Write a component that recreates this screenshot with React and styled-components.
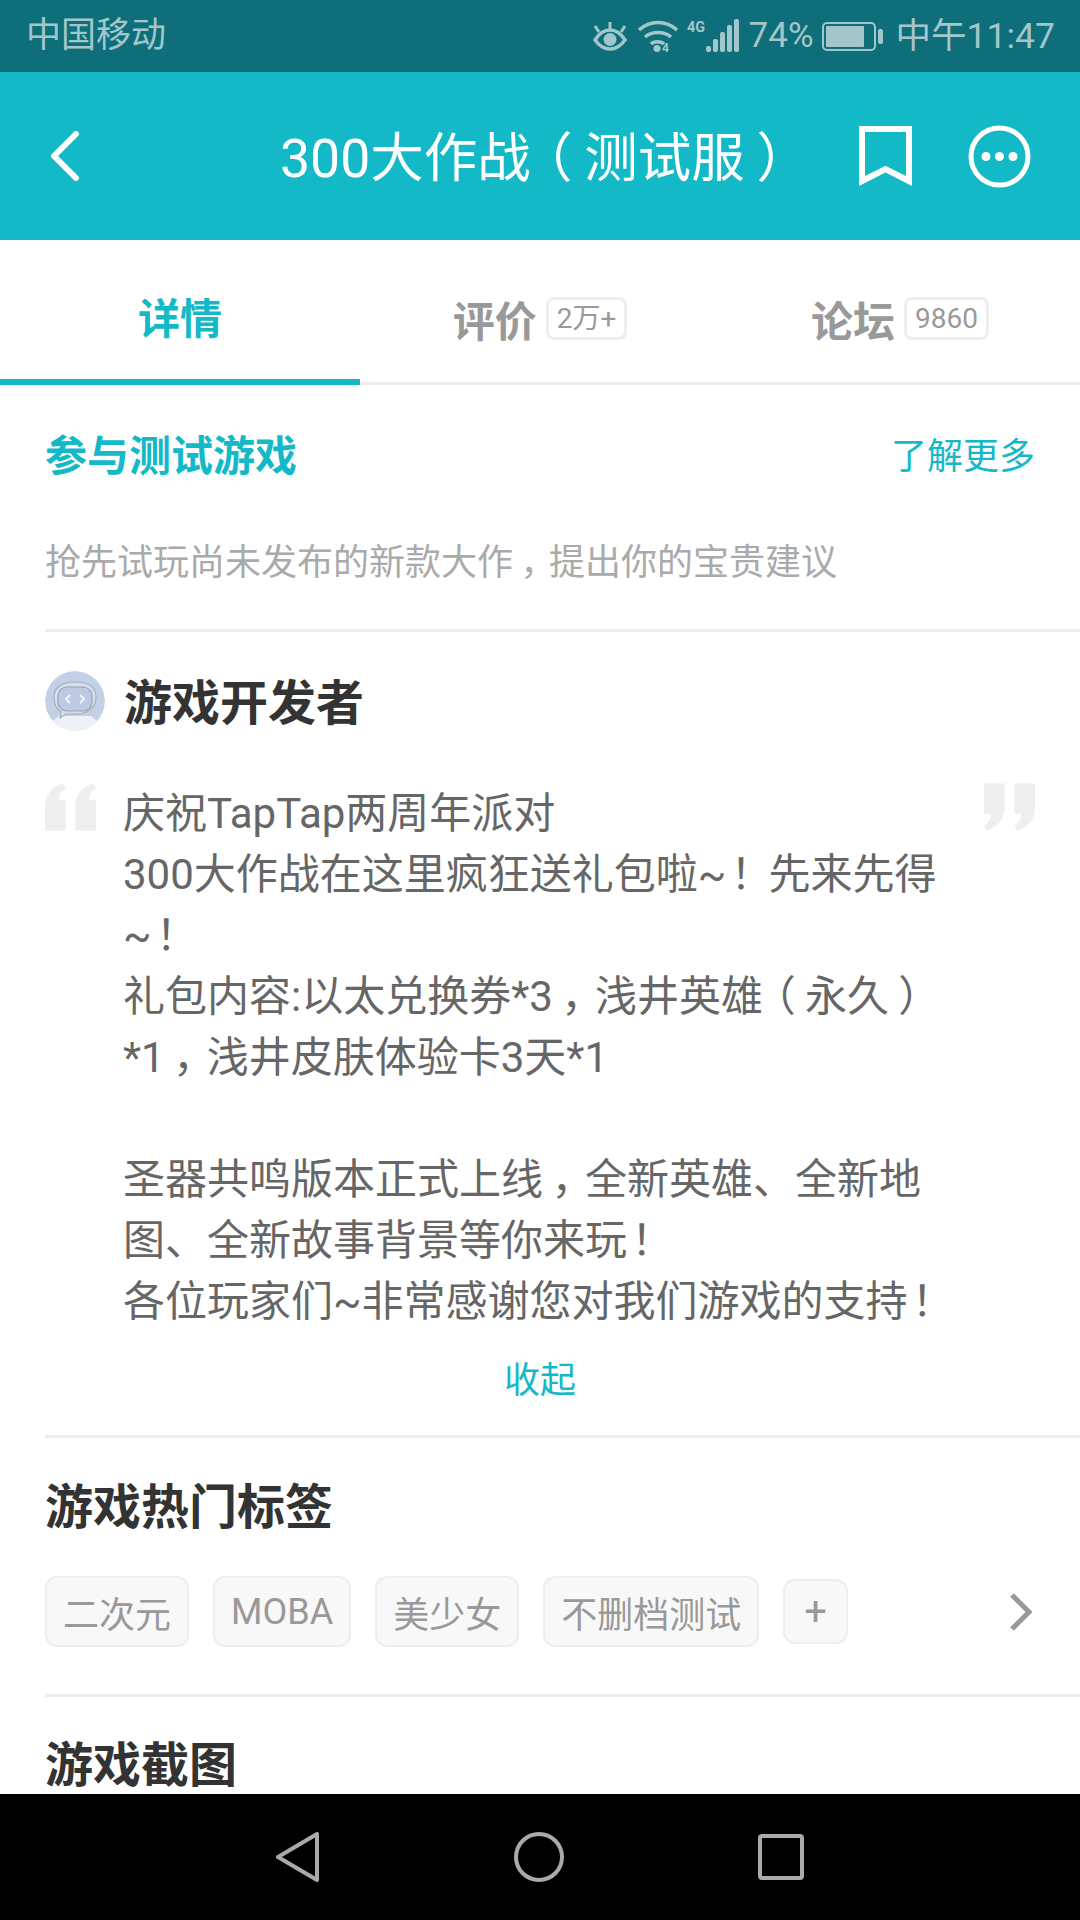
import React from 'react'
import styled, { createGlobalStyle } from 'styled-components'

const Global = createGlobalStyle`
  html, body { margin: 0; padding: 0; background: #fff; }
  body { font-family: Roboto, "Noto Sans CJK SC", sans-serif; }
`

const Page = styled.div`
  width: 1080px;
  height: 1920px;
  display: flex;
  flex-direction: column;
  overflow: hidden;
  background: #fff;
`

const StatusBar = styled.div`
  height: 72px;
  flex: none;
  box-sizing: border-box;
  background: #0e6f7a;
  color: #a3c6ca;
  display: flex;
  align-items: center;
  justify-content: space-between;
  padding: 0 25px 0 26px;
  font-size: 35px;
  line-height: 72px;
`

const StatusRight = styled.div`
  display: flex;
  align-items: center;
`

const IconSlot = styled.span`
  display: flex;
  margin-right: ${p => p.$mr}px;
`

const Pct = styled.span`
  margin-right: 8px;
`

const Clock = styled.span`
  margin-left: 13px;
  font-size: 35.5px;
`

const AppBar = styled.div`
  height: 168px;
  flex: none;
  box-sizing: border-box;
  background: #14b9c8;
  color: #fff;
  display: flex;
  align-items: center;
  padding: 0 49px 0 50px;
`

const Title = styled.div`
  font-size: 53.5px;
  margin-left: 200px;
  padding-bottom: 6px;
  width: 579px;
  flex: none;
  white-space: nowrap;
`

const BarIcons = styled.div`
  display: flex;
  align-items: center;
  gap: 56px;
`

const Tabs = styled.div`
  height: 145px;
  flex: none;
  display: flex;
  border-bottom: 3px solid #eee;
  box-sizing: border-box;
`

const Tab = styled.div`
  width: 360px;
  height: 145px;
  box-sizing: border-box;
  display: flex;
  align-items: center;
  justify-content: center;
  gap: 9px;
  padding-top: 12px;
  font-size: 42px;
  font-weight: 700;
  color: ${p => (p.$active ? '#14b9c8' : '#999')};
  border-bottom: ${p => (p.$active ? '6px solid #14b9c8' : 'none')};
`

const Count = styled.span`
  font-size: 28px;
  font-weight: 400;
  color: #999;
  border: 3px solid #eee;
  border-radius: 8px;
  height: 43px;
  line-height: 37px;
  box-sizing: border-box;
  padding: 0 8px;
`

const Content = styled.div`
  flex: 1;
  min-height: 0;
  overflow: hidden;
  padding-left: 45px;
`

const Section = styled.section`
  border-bottom: 3px solid #eee;
  padding-right: 45px;
  box-sizing: border-box;
  height: ${p => p.$h}px;
`

const Row = styled.div`
  display: flex;
  align-items: center;
  justify-content: space-between;
`

const TestTitle = styled.div`
  font-size: 42px;
  font-weight: 700;
  color: #14b9c8;
  line-height: 60px;
  padding-top: 42px;
`

const More = styled.div`
  font-size: 36px;
  color: #14b9c8;
  line-height: 60px;
  padding-top: 42px;
`

const Hint = styled.div`
  font-size: 36px;
  color: #aaa;
  line-height: 60px;
  margin-top: 46px;
`

const DevHead = styled.div`
  display: flex;
  align-items: center;
  gap: 19px;
  padding-top: 39px;
  height: 60px;
`

const Heading = styled.h2`
  margin: 0;
  font-size: 48px;
  font-weight: 700;
  color: #333;
  line-height: 60px;
`

const DevName = styled(Heading)`
  padding-top: 6px;
`

const TagsTitle = styled(Heading)`
  padding-top: 40px;
`

const ShotsTitle = styled(Heading)`
  margin-top: 39px;
`

const QuoteRow = styled.div`
  display: flex;
  justify-content: space-between;
  align-items: flex-start;
  margin-top: 52px;
`

const Body = styled.div`
  font-size: 42px;
  line-height: 61px;
  color: #666;
  margin: 0 0 0 26px;
  width: 860px;
  white-space: nowrap;
  flex: none;
`

const Line = styled.div`
  height: 61px;
`

// the phone font sets these marks further into their em box
const Mark = styled.span`
  display: inline-block;
  line-height: 1;
  transform: translateX(${p => p.$x}em);
`

const Collapse = styled.div`
  text-align: center;
  font-size: 36px;
  line-height: 50px;
  color: #14b9c8;
  margin-top: 24px;
`

const TagRow = styled.div`
  display: flex;
  align-items: center;
  margin-top: 38px;
`

const Tag = styled.div`
  height: 71px;
  box-sizing: border-box;
  padding: 0 16px;
  margin-right: 24px;
  display: flex;
  align-items: center;
  font-size: 36px;
  color: #999;
  background: #f8f8f8;
  border: 2px solid #eee;
  border-radius: 12px;
`

const PlusTag = styled(Tag)`
  height: 65px;
  width: 65px;
  padding: 0;
  margin-right: 0;
  justify-content: center;
  font-size: 40px;
`

const Chevron = styled.svg`
  margin-left: auto;
  margin-right: 2px;
`

const NavBar = styled.div`
  height: 126px;
  flex: none;
  background: #000;
  display: flex;
  align-items: center;
  justify-content: center;
  gap: 194px;
`

const Eye = () => (
  <svg width="36" height="30" viewBox="0 0 36 30" fill="none" stroke="#a3c6ca" strokeWidth="3.5">
    <path d="M3 19C8 11 13 9 18 9s10 2 15 10c-5 7-10 9-15 9S8 26 3 19z" />
    <circle cx="18" cy="18.5" r="6.5" fill="#a3c6ca" stroke="none" />
    <path d="M18 1v7M3 5l4 6M33 5l-4 6" strokeWidth="3" />
  </svg>
)

const Wifi = () => (
  <svg width="40" height="34" viewBox="0 0 40 34" fill="none" stroke="#a3c6ca" strokeWidth="3.5">
    <path d="M1 11c11-10 27-10 38 0" />
    <path d="M7 18c7-6 19-6 26 0" />
    <path d="M13 25c3-3 10-3 13 0" />
    <circle cx="19" cy="29.5" r="3.5" fill="#a3c6ca" stroke="none" />
    <text x="24" y="33" fontSize="12" fontWeight="700" fill="#a3c6ca" stroke="none" fontFamily="Roboto, sans-serif">4</text>
  </svg>
)

const Signal = () => (
  <svg width="54" height="36" viewBox="0 0 54 36">
    <text x="0" y="14" fontSize="15" fontWeight="700" fill="#a3c6ca" textLength="18" lengthAdjust="spacingAndGlyphs" fontFamily="Roboto, sans-serif">4G</text>
    {[[19, 28, 6], [26, 21, 13], [33, 14, 20], [40, 7, 27], [47, 1, 33]].map(([x, y, h]) => (
      <rect key={x} x={x} y={y} width="5" height={h} rx="2" fill="#a3c6ca" />
    ))}
  </svg>
)

const Battery = () => (
  <svg width="61" height="30" viewBox="0 0 61 30">
    <rect x="1" y="2" width="52" height="27" rx="4" fill="none" stroke="#a3c6ca" strokeWidth="2" />
    <rect x="4" y="5" width="38" height="21" rx="1" fill="#a3c6ca" />
    <rect x="56" y="8" width="5" height="15" rx="2" fill="#a3c6ca" />
  </svg>
)

const BackIcon = () => (
  <svg width="30" height="50" viewBox="0 0 30 50" fill="none" stroke="#fff" strokeWidth="6" strokeLinecap="round" strokeLinejoin="round">
    <path d="M26 3L4 25l22 22" />
  </svg>
)

const Bookmark = () => (
  <svg width="53" height="60" viewBox="0 0 53 60" fill="none" stroke="#fff" strokeWidth="6">
    <path d="M3 3h47v52L26.5 43 3 55z" />
  </svg>
)

const MoreIcon = () => (
  <svg width="63" height="63" viewBox="0 0 63 63" fill="none">
    <circle cx="31.5" cy="31.5" r="28.5" stroke="#fff" strokeWidth="5" />
    <circle cx="18" cy="31.5" r="4.5" fill="#fff" />
    <circle cx="31.5" cy="31.5" r="4.5" fill="#fff" />
    <circle cx="45" cy="31.5" r="4.5" fill="#fff" />
  </svg>
)

const Avatar = () => (
  <svg width="60" height="60" viewBox="0 0 60 60">
    <clipPath id="avatarClip"><circle cx="30" cy="30" r="30" /></clipPath>
    <g clipPath="url(#avatarClip)">
      <circle cx="30" cy="30" r="30" fill="#c3d1e6" />
      <path d="M8 60V50l6-5h32l6 5v10z" fill="#eef2f8" />
      <path d="M9 26c0-10 8-15 21-15s21 5 21 15c0 11-8 17-21 17h-9l-6 4 1-6c-5-3-7-8-7-15z" fill="#d5deec" stroke="#a3adbb" strokeWidth="1.2" />
      <rect x="13" y="16" width="34" height="24" rx="9" fill="#bccbe1" stroke="#98a3b4" strokeWidth="1.2" />
      <path d="M25 24l-4 4 4 4M35 24l4 4-4 4" fill="none" stroke="#f2f5fa" strokeWidth="2" />
    </g>
  </svg>
)

const QuoteOpen = () => (
  <svg width="53" height="48" viewBox="0 0 53 48" fill="#eee">
    <path d="M0 48V24C0 12 6 4 18 0l3 5c-5 3-7 7-7 12h7v31zM31 48V24C31 12 37 4 49 0l3 5c-5 3-7 7-7 12h7v31z" />
  </svg>
)

const QuoteClose = () => (
  <svg width="53" height="48" viewBox="0 0 53 48" fill="#eee">
    <path d="M53 0v24c0 12-6 20-18 24l-3-5c5-3 7-7 7-12h-7V0zM22 0v24c0 12-6 20-18 24l-3-5c5-3 7-7 7-12H1V0z" />
  </svg>
)

const markShift = { '，': 0.2, '！': 0.1, '（': -0.22, '）': 0.22 }

const withMarks = text =>
  text.split(/([，！（）])/).map((part, i) =>
    markShift[part] ? <Mark key={i} $x={markShift[part]}>{part}</Mark> : part
  )

const lines = [
  '庆祝TapTap两周年派对',
  '300大作战在这里疯狂送礼包啦~！先来先得',
  '~！',
  '礼包内容:以太兑换券*3，浅井英雄（永久）',
  '*1，浅井皮肤体验卡3天*1',
  '',
  '圣器共鸣版本正式上线，全新英雄、全新地',
  '图、全新故事背景等你来玩！',
  '各位玩家们~非常感谢您对我们游戏的支持！',
]

const tags = ['二次元', 'MOBA', '美少女', '不删档测试']

export default function App() {
  return (
    <Page>
      <Global />
      <StatusBar>
        <span>中国移动</span>
        <StatusRight>
          <IconSlot $mr={10}><Eye /></IconSlot>
          <IconSlot $mr={9}><Wifi /></IconSlot>
          <IconSlot $mr={8}><Signal /></IconSlot>
          <Pct>74%</Pct>
          <Battery />
          <Clock>中午11:47</Clock>
        </StatusRight>
      </StatusBar>
      <AppBar>
        <BackIcon />
        <Title>{withMarks('300大作战（测试服）')}</Title>
        <BarIcons>
          <Bookmark />
          <MoreIcon />
        </BarIcons>
      </AppBar>
      <Tabs>
        <Tab $active>详情</Tab>
        <Tab>评价<Count>2万+</Count></Tab>
        <Tab>论坛<Count>9860</Count></Tab>
      </Tabs>
      <Content>
        <Section $h={247}>
          <Row>
            <TestTitle>参与测试游戏</TestTitle>
            <More>了解更多</More>
          </Row>
          <Hint>{withMarks('抢先试玩尚未发布的新款大作，提出你的宝贵建议')}</Hint>
        </Section>
        <Section $h={806}>
          <DevHead>
            <Avatar />
            <DevName>游戏开发者</DevName>
          </DevHead>
          <QuoteRow>
            <QuoteOpen />
            <Body>
              {lines.map((l, i) => <Line key={i}>{withMarks(l)}</Line>)}
            </Body>
            <QuoteClose />
          </QuoteRow>
          <Collapse>收起</Collapse>
        </Section>
        <Section $h={259}>
          <TagsTitle>游戏热门标签</TagsTitle>
          <TagRow>
            {tags.map(t => <Tag key={t}>{t}</Tag>)}
            <PlusTag>+</PlusTag>
            <Chevron width="24" height="38" viewBox="0 0 24 38" fill="none" stroke="#999" strokeWidth="5">
              <path d="M3 2l17 17L3 36" />
            </Chevron>
          </TagRow>
        </Section>
        <ShotsTitle>游戏截图</ShotsTitle>
      </Content>
      <NavBar>
        <svg width="44" height="50" viewBox="0 0 44 50" fill="none" stroke="#aaa" strokeWidth="4" strokeLinejoin="round">
          <path d="M41 2v46L2 25z" />
        </svg>
        <svg width="50" height="50" viewBox="0 0 50 50" fill="none" stroke="#aaa" strokeWidth="4">
          <circle cx="25" cy="25" r="23" />
        </svg>
        <svg width="46" height="46" viewBox="0 0 46 46" fill="none" stroke="#aaa" strokeWidth="4" strokeLinejoin="round">
          <rect x="2" y="2" width="42" height="42" rx="2" />
        </svg>
      </NavBar>
    </Page>
  )
}
